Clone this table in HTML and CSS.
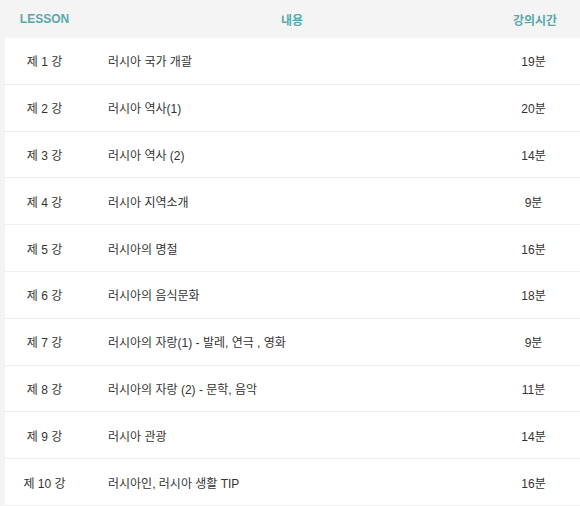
FILE: index.html
```html
<!DOCTYPE html>
<html lang="ko">
<head>
<meta charset="utf-8">
<title>LESSON</title>
<link rel="stylesheet" href="styles.css">
</head>
<body>
<div class="board">
  <div class="head">
    <div class="c-no">LESSON</div>
    <div class="c-title">내용</div>
    <div class="c-time">강의시간</div>
  </div>
  <div class="list">
    <div class="row"><div class="c-no">제 1 강</div><div class="c-title">러시아 국가 개괄</div><div class="c-time">19분</div></div>
    <div class="row"><div class="c-no">제 2 강</div><div class="c-title">러시아 역사(1)</div><div class="c-time">20분</div></div>
    <div class="row"><div class="c-no">제 3 강</div><div class="c-title">러시아 역사 (2)</div><div class="c-time">14분</div></div>
    <div class="row"><div class="c-no">제 4 강</div><div class="c-title">러시아 지역소개</div><div class="c-time">9분</div></div>
    <div class="row"><div class="c-no">제 5 강</div><div class="c-title">러시아의 명절</div><div class="c-time">16분</div></div>
    <div class="row"><div class="c-no">제 6 강</div><div class="c-title">러시아의 음식문화</div><div class="c-time">18분</div></div>
    <div class="row"><div class="c-no">제 7 강</div><div class="c-title">러시아의 자랑(1) - 발레, 연극 , 영화</div><div class="c-time">9분</div></div>
    <div class="row"><div class="c-no">제 8 강</div><div class="c-title">러시아의 자랑 (2) - 문학, 음악</div><div class="c-time">11분</div></div>
    <div class="row"><div class="c-no">제 9 강</div><div class="c-title">러시아 관광</div><div class="c-time">14분</div></div>
    <div class="row"><div class="c-no">제 10 강</div><div class="c-title">러시아인, 러시아 생활 TIP</div><div class="c-time">16분</div></div>
  </div>
</div>
</body>
</html>
```

FILE: styles.css
```css
html, body {
  margin: 0;
  padding: 0;
  background: #f4f4f4;
}
body {
  font-family: "Liberation Sans", "Noto Sans CJK KR", Arial, sans-serif;
  font-size: 12px;
  color: #333;
}
.board {
  width: 580px;
}
.head {
  display: grid;
  grid-template-columns: 84px 1fr 90px;
  height: 38px;
  align-items: center;
  background: #f4f4f4;
  color: #5aa8ad;
  font-weight: bold;
  font-size: 12px;
}
.head .c-no {
  text-align: center;
  padding-left: 5px;
}
.head .c-title {
  text-align: center;
  padding-left: 10px;
}
.head .c-time {
  text-align: center;
}
.list {
  margin-left: 5px;
  background: #fff;
}
.row {
  display: grid;
  grid-template-columns: 79px 1fr 90px;
  height: 45.8px;
  align-items: center;
  border-bottom: 1px solid #efefef;
}
.row .c-no {
  text-align: center;
}
.row .c-title {
  padding-left: 24px;
}
.row .c-time {
  text-align: center;
  padding-right: 3px;
}
```
